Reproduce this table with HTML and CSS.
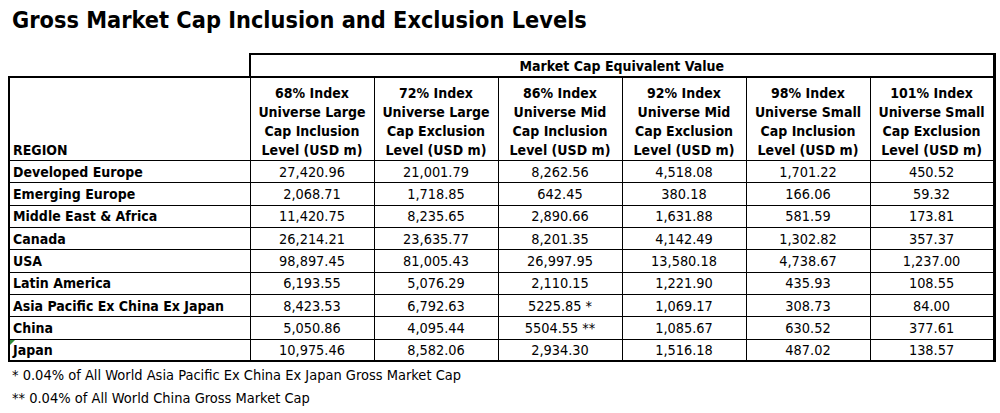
FILE: index.html
```html
<!DOCTYPE html>
<html lang="en">
<head>
<meta charset="utf-8">
<title>Gross Market Cap Inclusion and Exclusion Levels</title>
<link rel="stylesheet" href="styles.css">
</head>
<body>
<h1 class="title">Gross Market Cap Inclusion and Exclusion Levels</h1>
<table class="levels">
  <colgroup>
    <col class="col-region">
    <col class="col-val"><col class="col-val"><col class="col-val">
    <col class="col-val"><col class="col-val"><col class="col-val">
  </colgroup>
  <thead>
    <tr class="group-row">
      <th class="blank"></th>
      <th class="group" colspan="6">Market Cap Equivalent Value</th>
    </tr>
    <tr class="head-row">
      <th class="region-head">REGION</th>
      <th>68% Index<br>Universe Large<br>Cap Inclusion<br>Level (USD m)</th>
      <th>72% Index<br>Universe Large<br>Cap Exclusion<br>Level (USD m)</th>
      <th>86% Index<br>Universe Mid<br>Cap Inclusion<br>Level (USD m)</th>
      <th>92% Index<br>Universe Mid<br>Cap Exclusion<br>Level (USD m)</th>
      <th>98% Index<br>Universe Small<br>Cap Inclusion<br>Level (USD m)</th>
      <th class="last">101% Index<br>Universe Small<br>Cap Exclusion<br>Level (USD m)</th>
    </tr>
  </thead>
  <tbody>
    <tr><th>Developed Europe</th><td>27,420.96</td><td>21,001.79</td><td>8,262.56</td><td>4,518.08</td><td>1,701.22</td><td class="last">450.52</td></tr>
    <tr><th>Emerging Europe</th><td>2,068.71</td><td>1,718.85</td><td>642.45</td><td>380.18</td><td>166.06</td><td class="last">59.32</td></tr>
    <tr><th>Middle East &amp; Africa</th><td>11,420.75</td><td>8,235.65</td><td>2,890.66</td><td>1,631.88</td><td>581.59</td><td class="last">173.81</td></tr>
    <tr><th>Canada</th><td>26,214.21</td><td>23,635.77</td><td>8,201.35</td><td>4,142.49</td><td>1,302.82</td><td class="last">357.37</td></tr>
    <tr><th>USA</th><td>98,897.45</td><td>81,005.43</td><td>26,997.95</td><td>13,580.18</td><td>4,738.67</td><td class="last">1,237.00</td></tr>
    <tr><th>Latin America</th><td>6,193.55</td><td>5,076.29</td><td>2,110.15</td><td>1,221.90</td><td>435.93</td><td class="last">108.55</td></tr>
    <tr><th>Asia Pacific Ex China Ex Japan</th><td>8,423.53</td><td>6,792.63</td><td>5225.85 *</td><td>1,069.17</td><td>308.73</td><td class="last">84.00</td></tr>
    <tr><th>China</th><td>5,050.86</td><td>4,095.44</td><td>5504.55 **</td><td>1,085.67</td><td>630.52</td><td class="last">377.61</td></tr>
    <tr class="final"><th class="flagged">Japan</th><td>10,975.46</td><td>8,582.06</td><td>2,934.30</td><td>1,516.18</td><td>487.02</td><td class="last">138.57</td></tr>
  </tbody>
</table>
<div class="notes">
  <p>* 0.04% of All World Asia Pacific Ex China Ex Japan Gross Market Cap</p>
  <p>** 0.04% of All World China Gross Market Cap</p>
</div>
</body>
</html>
```
FILE: styles.css
```css
html, body {
  margin: 0;
  padding: 0;
  background: #ffffff;
  color: #000000;
  font-family: "DejaVu Sans Condensed", "DejaVu Sans", "Liberation Sans", sans-serif;
  font-stretch: condensed;
}

.title {
  margin: 0;
  padding: 6px 0 0 12px;
  height: 53px;
  box-sizing: border-box;
  font-size: 23.3px;
  line-height: 28px;
  font-weight: bold;
}

.levels {
  margin-left: 8px;
  border-collapse: collapse;
  table-layout: fixed;
  width: 986px;
  font-size: 14px;
}

.col-region { width: 241px; }
.col-val { width: 124px; }

.levels th,
.levels td {
  padding: 0;
  border: 1px solid #000;
}

.group-row th { height: 21px; }

.levels th.blank {
  border: none;
  border-bottom: 2px solid #000;
}

.levels th.group {
  border: 2px solid #000;
  border-right-width: 3px;
  font-weight: bold;
  text-align: center;
  line-height: 20px;
}

.head-row th {
  height: 82px;
  vertical-align: bottom;
  text-align: center;
  font-weight: bold;
  line-height: 19px;
  border-top: 2px solid #000;
}

.head-row th.region-head {
  text-align: left;
  padding-left: 3px;
  border-left: 2px solid #000;
}

.levels tbody tr { height: 22.33px; }

.levels tbody th {
  text-align: left;
  font-weight: bold;
  padding-left: 3px;
  border-left: 2px solid #000;
  line-height: 20px;
  vertical-align: middle;
}

.levels tbody td {
  text-align: center;
  font-size: 14.4px;
  line-height: 20px;
  vertical-align: middle;
}

.levels .last { border-right: 3px solid #000; }

.levels tr.final th,
.levels tr.final td { border-bottom: 2px solid #000; }

.flagged { position: relative; }
.flagged::before {
  content: "";
  position: absolute;
  left: 0;
  top: 0;
  border-top: 5px solid #2e8b3a;
  border-right: 5px solid transparent;
}

.notes {
  padding: 2px 0 0 12px;
  font-size: 14.5px;
  line-height: 23px;
}

.notes p { margin: 0; }
```
